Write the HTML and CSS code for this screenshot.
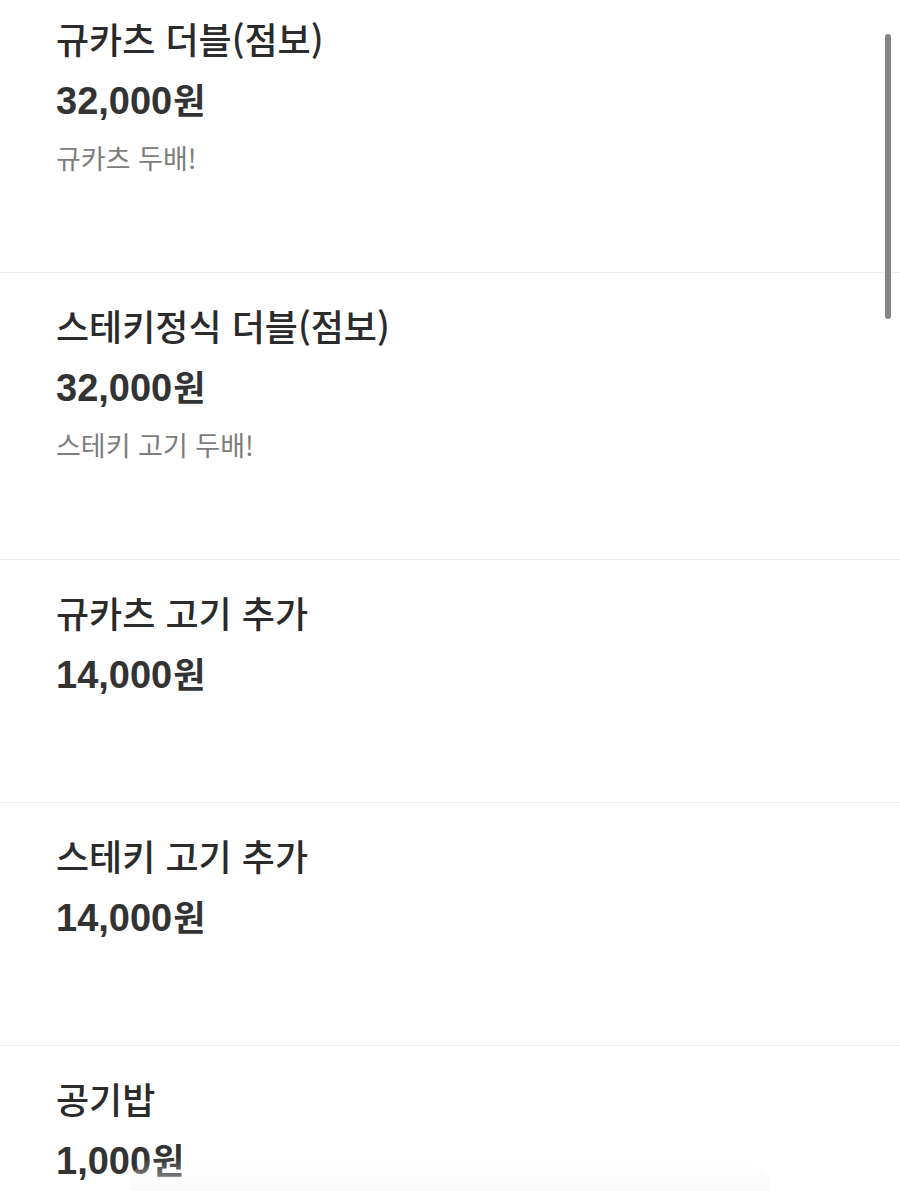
FILE: index.html
```html
<!DOCTYPE html>
<html lang="ko">
<head>
<meta charset="utf-8">
<title>메뉴</title>
<link rel="stylesheet" href="styles.css">
</head>
<body>
<div class="screen">
  <ul class="menu">
    <li class="item">
      <div class="name">규카츠 더블(점보)</div>
      <div class="price">32,000<span class="won">원</span></div>
      <div class="desc">규카츠 두배!</div>
    </li>
    <li class="item">
      <div class="name">스테키정식 더블(점보)</div>
      <div class="price">32,000<span class="won">원</span></div>
      <div class="desc">스테키 고기 두배!</div>
    </li>
    <li class="item item--short">
      <div class="name">규카츠 고기 추가</div>
      <div class="price">14,000<span class="won">원</span></div>
    </li>
    <li class="item item--short">
      <div class="name">스테키 고기 추가</div>
      <div class="price">14,000<span class="won">원</span></div>
    </li>
    <li class="item item--short">
      <div class="name">공기밥</div>
      <div class="price">1,000<span class="won">원</span></div>
    </li>
  </ul>
  <div class="scrollbar"></div>
  <div class="fade"></div>
</div>
</body>
</html>
```
FILE: styles.css
```css
* { box-sizing: border-box; }
html, body {
  margin: 0;
  padding: 0;
  background: #ffffff;
}
body {
  font-family: "Noto Sans CJK KR", "Noto Sans", sans-serif;
  color: #2e2e2e;
}
.screen {
  position: relative;
  width: 900px;
  height: 1191px;
  overflow: hidden;
}
.menu {
  list-style: none;
  margin: -14px 0 0 0;
  padding: 0;
}
.item {
  padding: 28px 56px 96px;
  border-bottom: 1px solid #eeeeee;
}
.item--short {
  padding-bottom: 103px;
}
.name {
  font-size: 36px;
  font-weight: 500;
  line-height: 48px;
  height: 48px;
  color: #2b2b2b;
}
.price {
  margin-top: 15px;
  font-family: "Liberation Sans", "Noto Sans CJK KR", sans-serif;
  font-size: 38px;
  font-weight: 700;
  line-height: 48px;
  height: 48px;
  color: #333333;
}
.won {
  font-family: "Noto Sans CJK KR", sans-serif;
  font-size: 35px;
  line-height: 0;
  margin-left: 1px;
}
.desc {
  margin-top: 15px;
  font-size: 27px;
  font-weight: 400;
  line-height: 36px;
  height: 36px;
  color: #7d7d7d;
}
.scrollbar {
  position: absolute;
  top: 34px;
  left: 885px;
  width: 6px;
  height: 285px;
  border-radius: 3px;
  background: #858585;
}
.fade {
  position: absolute;
  left: 130px;
  right: 130px;
  bottom: 0;
  height: 34px;
  background: linear-gradient(to bottom, rgba(245,245,245,0) 0%, rgba(246,246,246,0.6) 100%);
  border-radius: 30px 30px 0 0;
}
```
